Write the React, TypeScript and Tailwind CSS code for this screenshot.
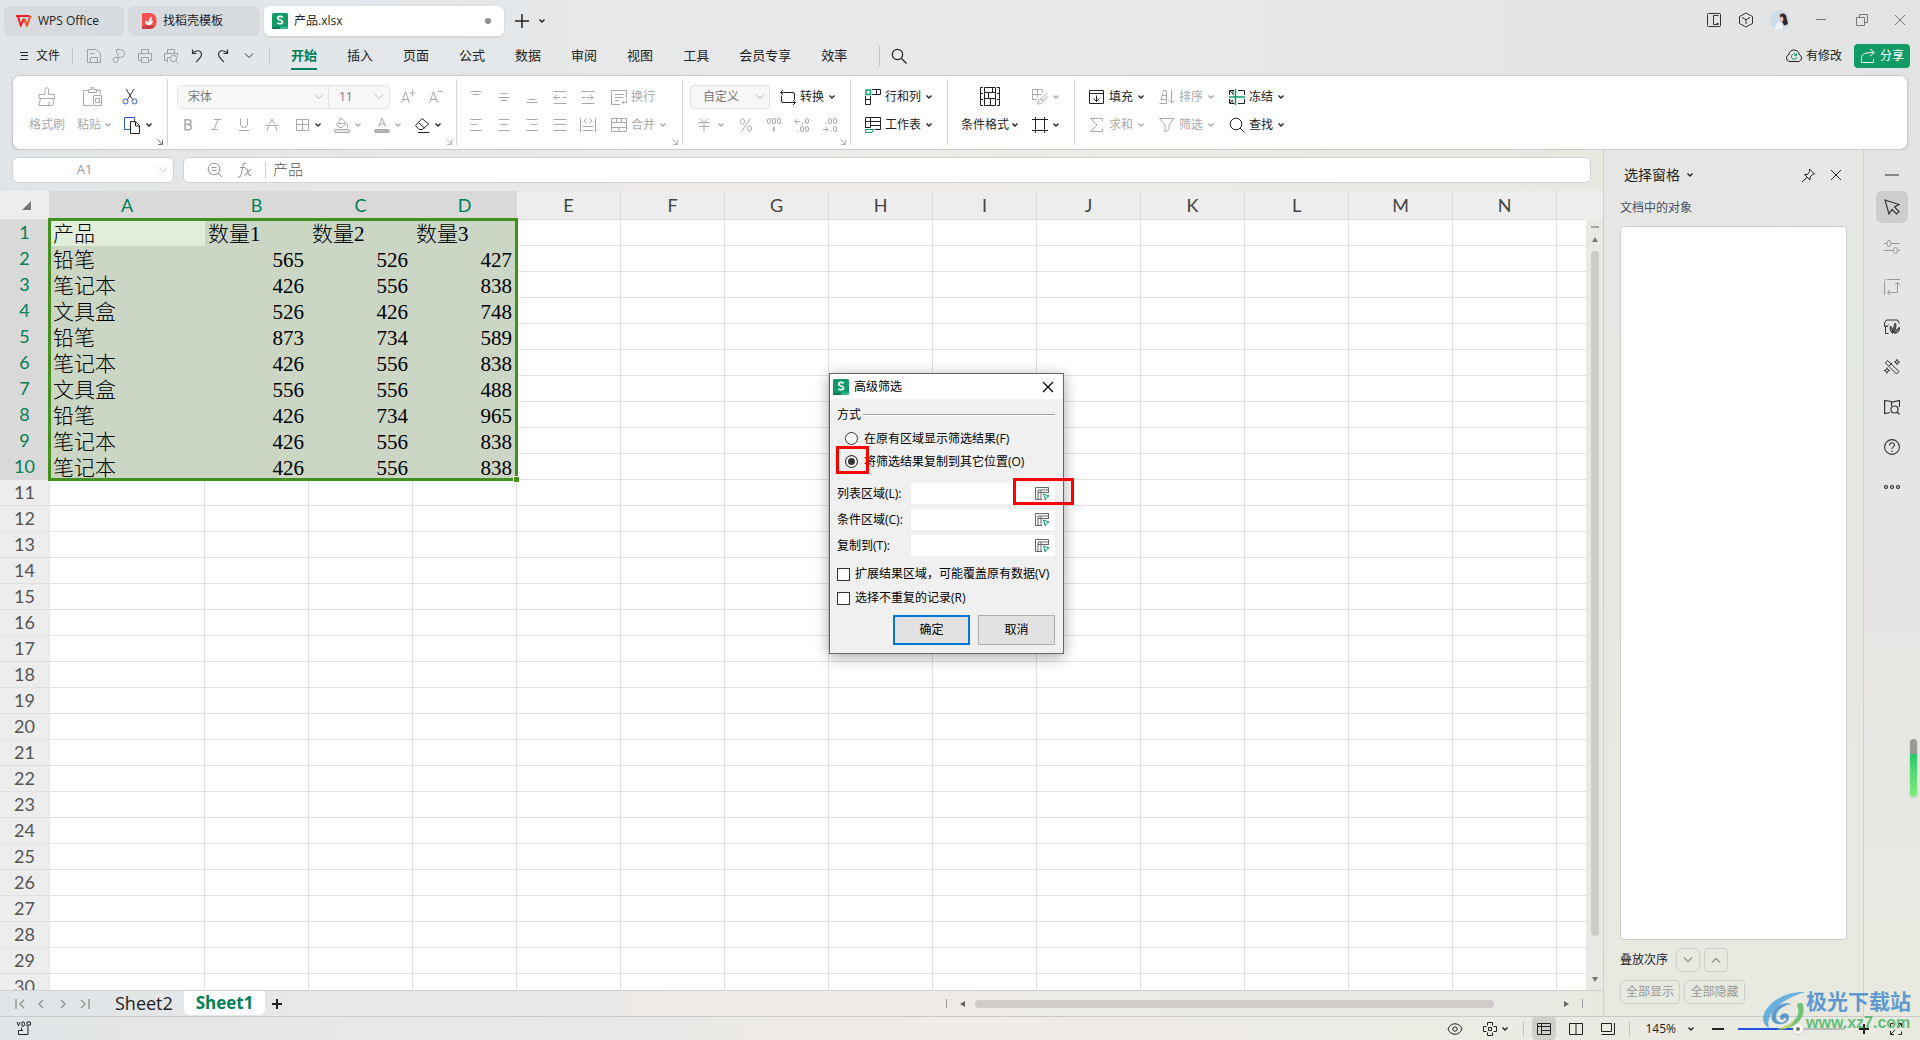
import type { ReactNode } from "react";
import { clsx } from "clsx";

/* ---------- icons ---------- */

type IconProps = { children: ReactNode; size?: number; className?: string; box?: number; w?: number };

function Icon({ children, size = 16, box = 16, w = 1, className }: IconProps) {
    return (
        <svg
            width={size}
            height={size}
            viewBox={`0 0 ${box} ${box}`}
            fill="none"
            stroke="currentColor"
            strokeWidth={w}
            className={clsx("shrink-0", className)}
            aria-hidden="true"
        >
            {children}
        </svg>
    );
}

function Chevron({ className }: { className?: string }) {
    return (
        <svg width="6" height="4" viewBox="0 0 6 4" fill="none" stroke="currentColor" strokeWidth="1.4" className={clsx("shrink-0", className)} aria-hidden="true">
            <path d="M.5 .5 3 3 5.5 .5" />
        </svg>
    );
}

function WideChevron({ className, up, w = 1 }: { className?: string; up?: boolean; w?: number }) {
    return (
        <svg width="10" height="6" viewBox="0 0 10 6" fill="none" stroke="currentColor" strokeWidth={w} className={clsx("shrink-0", className)} aria-hidden="true">
            <path d={up ? "M1 5.500 5 1.500l4 4" : "M1 .5l4 4 4-4"} />
        </svg>
    );
}

function CornerArrow({ className }: { className?: string }) {
    return (
        <svg width="6" height="6" viewBox="0 0 6 6" fill="none" stroke="currentColor" className={clsx("absolute bottom-0 right-1", className)} aria-hidden="true">
            <path d="M.5 .5l5 5M5.5 1v4.5H1" />
        </svg>
    );
}

function SheetLogo() {
    return (
        <svg width="16" height="16" viewBox="0 0 16 16" className="shrink-0" aria-hidden="true">
            <rect width="16" height="16" rx="1.5" fill="#109a66" />
            <path d="M0 13.5h16v1a1.5 1.5 0 0 1-1.5 1.5h-13A1.5 1.5 0 0 1 0 14.5z" fill="#35b583" />
            <path d="M0 13.5h8V16H1.5A1.5 1.5 0 0 1 0 14.5z" fill="#0a7a50" />
            <path d="M10.7 4.2C9 3 5.6 3 5.6 5.2c0 2.3 5 1.3 5 3.7 0 2.2-3.7 2.2-5.4 1" fill="none" stroke="#fff" strokeWidth="1.7" />
        </svg>
    );
}

function CellPicker() {
    return (
        <svg width="15" height="14" viewBox="0 0 15 14" fill="none" aria-hidden="true">
            <path d="M13.5 6V.5H.5v12H7M3 12V3h10.5M3 5.500h10.500M6 3v9" stroke="#666" />
            <path d="M8.500 7l5.500 2-2.500 1.200L10.300 13z" stroke="#109a66" fill="#fff" />
        </svg>
    );
}

/* ---------- data ---------- */

const menuTabs = ["开始", "插入", "页面", "公式", "数据", "审阅", "视图", "工具", "会员专享", "效率"];

const columns = ["A", "B", "C", "D", "E", "F", "G", "H", "I", "J", "K", "L", "M", "N"];

const records = [
    ["产品", "数量1", "数量2", "数量3"],
    ["铅笔", "565", "526", "427"],
    ["笔记本", "426", "556", "838"],
    ["文具盒", "526", "426", "748"],
    ["铅笔", "873", "734", "589"],
    ["笔记本", "426", "556", "838"],
    ["文具盒", "556", "556", "488"],
    ["铅笔", "426", "734", "965"],
    ["笔记本", "426", "556", "838"],
    ["笔记本", "426", "556", "838"],
];

const rowNumbers = Array.from({ length: 30 }, (_, i) => i + 1);

/* ---------- title bar ---------- */

function TitleBar() {
    return (
        <header className="flex h-[38px] shrink-0 items-start pt-[6px] text-xs text-[#222]">
            <button className="ml-1 flex h-[30px] w-[120px] items-center gap-[6px] rounded-md bg-[#d7dade] pl-3">
                <svg width="16" height="12" viewBox="0 0 16 12" aria-hidden="true">
                    <path d="M0 1h13.5M1.8 1l3 9.500L8 3.500" fill="none" stroke="#f5222d" strokeWidth="2" />
                    <path d="M8 3.500l2.800 7L14.500.8" fill="none" stroke="#ff4a1f" strokeWidth="2" />
                </svg>
                WPS Office
            </button>
            <button className="ml-1 flex h-[30px] w-[132px] items-center gap-[6px] rounded-md bg-[#d7dade] pl-[14px]">
                <svg width="15" height="16" viewBox="0 0 15 16" aria-hidden="true">
                    <path d="M1.5 0H8a6.5 6.5 0 0 1 6.5 6.8v2.4A6.5 6.5 0 0 1 8 16H1.5A1.5 1.5 0 0 1 0 14.5v-13A1.5 1.5 0 0 1 1.5 0z" fill="#f5504f" />
                    <path d="M0 13h12.5A6.5 6.5 0 0 1 8 16H1.5A1.5 1.5 0 0 1 0 14.5z" fill="#c93a3c" />
                    <path d="M7 12c-3 0-4-2-3.5-4.5C5 8 6 9 6.300 10 6.500 7 8 4.500 9.500 3.500c.5 2 .3 3.500-.5 5l1.800-1C11 10 9.500 12 7 12z" fill="#fff" />
                </svg>
                找稻壳模板
            </button>
            <div className="ml-1 flex h-[30px] w-60 items-center gap-[6px] rounded-md bg-white pl-2 pr-[13px] shadow-sm">
                <SheetLogo />
                <span className="flex-1">产品.xlsx</span>
                <span className="size-[6px] rounded-full bg-[#8f8f8f]" />
            </div>
            <button aria-label="新建" className="ml-[11px] flex h-[30px] items-center">
                <Icon size={14} box={14} w={1.5}><path d="M7 0v14M0 7h14" /></Icon>
            </button>
            <button aria-label="更多标签" className="ml-[10px] flex h-[30px] items-center">
                <Chevron />
            </button>
            <div className="ml-auto flex h-7 items-center text-[#333]">
                <button aria-label="分屏" className="flex w-8 justify-center">
                    <Icon><rect x="1.5" y="1.5" width="13" height="13" rx="1" /><path d="M12.5 12.5h-5v-9h5M10.500 11.500h2" /></Icon>
                </button>
                <button aria-label="应用" className="flex w-8 justify-center">
                    <Icon><path d="M8 1l6.500 3.500v7L8 15l-6.500-3.500v-7zM4 5.500l4 2.200 4-2.200M8 7.700V12" /></Icon>
                </button>
                <button aria-label="账号" className="flex w-9 justify-center">
                    <svg width="20" height="20" viewBox="0 0 20 20" aria-hidden="true">
                        <circle cx="10" cy="10" r="10" fill="#cfdde6" />
                        <path d="M10 5c2-2.500 6-1.500 6.500 2 .5 4 2 5 1 7.500l-3.500 1C13 12 9 9 10 5z" fill="#33272d" />
                        <path d="M10.500 7c1.500-1 3 0 3 2s-1.500 3-2.500 2.500-1.500-3-.5-4.500z" fill="#e9bfae" />
                        <path d="M5 19c0-4 2-6.500 5-7l3 3v4.500z" fill="#eef3f6" />
                        <path d="M9 5l3-1.500" stroke="#b79a62" />
                    </svg>
                </button>
                <button aria-label="最小化" className="flex w-[46px] justify-center text-[#777]"><Icon><path d="M3 7.500h10" /></Icon></button>
                <button aria-label="还原" className="flex w-9 justify-center text-[#777]">
                    <Icon><path d="M2.5 5.5h8v8h-8zM5.500 5V2.500h8v8H11" /></Icon>
                </button>
                <button aria-label="关闭" className="flex w-10 justify-center text-[#777]"><Icon><path d="M3 3l10 10M13 3L3 13" /></Icon></button>
            </div>
        </header>
    );
}

/* ---------- menu bar ---------- */

function MenuBar() {
    return (
        <nav className="mb-[2px] flex h-[35px] shrink-0 items-center text-[#222]">
            <button className="ml-5 flex items-center gap-2 text-xs">
                <Icon size={8} box={8}><path d="M0 .5h8M1 3.500h7M0 7.500h8" /></Icon>
                文件
            </button>
            <span className="ml-3 h-4 w-px bg-[#c3c6ca]" />
            <div className="ml-2 flex items-center text-[#9da0a4]">
                <button aria-label="保存" className="flex w-[25px] justify-center">
                    <Icon><path d="M1.500 1.500h9l4 4v9h-13zM4.500 14V9.500h7V14M4.500 5.500h4" /></Icon>
                </button>
                <button aria-label="输出" className="flex w-[26px] justify-center">
                    <Icon><path d="M5.500 5V1.500h4a4 4 0 0 1 0 8h-5a2.500 2.500 0 1 0 2.500 2.500V5" /></Icon>
                </button>
                <button aria-label="打印" className="flex w-[26px] justify-center">
                    <Icon><path d="M4.500 5V1.500h7V5M4 12.500H1.500v-7h13v7H12M4.500 9.500h7v5h-7z" /></Icon>
                </button>
                <button aria-label="打印预览" className="flex w-[26px] justify-center">
                    <Icon><path d="M4.500 5V1.500h7V5M4 12.500H1.500v-7h13v3M4.500 14.500v-5H7" /><circle cx="10.500" cy="10.500" r="3.200" /><path d="M13 13l2.500 2.500" /></Icon>
                </button>
                <button aria-label="撤销" className="flex w-[26px] justify-center text-[#333]">
                    <Icon w={1.200}><path d="M3.500 1.500v4h4M3.500 5.500C6 2 12 1.500 12.500 6c.2 3-2.500 5-5.500 8" /></Icon>
                </button>
                <button aria-label="恢复" className="flex w-[26px] justify-center text-[#333]">
                    <Icon w={1.200}><path d="M12.500 1.500v4h-4M12.500 5.500C10 2 4 1.500 3.500 6c-.2 3 2.500 5 5.500 8" /></Icon>
                </button>
                <button aria-label="更多" className="flex w-[26px] justify-center text-[#333]">
                    <WideChevron />
                </button>
            </div>
            <span className="ml-[7px] h-4 w-px bg-[#c3c6ca]" />
            <ul className="ml-[21px] flex items-center gap-[30px] text-[13px]">
                {menuTabs.map((tab, i) => (
                    <li key={tab}>
                        <button className={clsx("h-7 border-b-2 leading-6", i === 0 ? "border-[#008055] font-bold text-[#008055]" : "border-transparent")}>
                            {tab}
                        </button>
                    </li>
                ))}
            </ul>
            <span className="ml-8 h-5 w-px bg-[#c3c6ca]" />
            <button aria-label="搜索" className="ml-[11px]">
                <Icon w={1.200}><circle cx="6.500" cy="6.500" r="5.200" /><path d="M10.500 10.500l5 5" /></Icon>
            </button>
            <div className="ml-auto mr-[10px] flex items-center gap-3 text-xs">
                <button className="flex items-center gap-1">
                    <Icon>
                        <path d="M4 13.500C1.500 13.500.5 11.500.5 10S1.500 6.700 3 6.500C3 4 5 2 8 2s5 2 5 4.500c1.500.2 2.500 2 2.500 3.500s-1 3.500-3.500 3.500z" />
                        <path d="M10.500 7.300A2.700 2.700 0 1 0 10.800 9M10.500 5.500v2h-2" stroke="#109a66" />
                    </Icon>
                    有修改
                </button>
                <button className="flex h-6 w-14 items-center justify-center gap-1 rounded bg-[#109a66] text-white">
                    <Icon><path d="M1.500 9v5.500h12V11M1.500 9.500C2 6 5 4.500 13 4.500M10 1l4.500 3.500L10 8" /></Icon>
                    分享
                </button>
            </div>
        </nav>
    );
}

/* ---------- ribbon ---------- */

function Tool({ label, icon, off, arrow }: { label: string; icon: ReactNode; off?: boolean; arrow?: boolean }) {
    return (
        <button className={clsx("flex h-7 items-center whitespace-nowrap", off ? "text-[#a9a9a9]" : "text-[#222]")}>
            {icon}
            <span className="ml-1">{label}</span>
            {arrow && <Chevron className="ml-[5px]" />}
        </button>
    );
}

function IconButton({ label, children, arrow, off = true }: { label: string; children: ReactNode; arrow?: boolean; off?: boolean }) {
    return (
        <button
            aria-label={label}
            className={clsx("flex h-7 shrink-0 items-center", arrow ? "w-10 gap-[5px] pl-2" : "w-7 justify-center", off ? "text-[#a9a9a9]" : "text-[#222]")}
        >
            {children}
            {arrow && <Chevron />}
        </button>
    );
}

const group = "relative flex h-[66px] shrink-0 border-r border-[#d5d5d5] pt-1";

function Ribbon() {
    return (
        <section className="mx-3 flex h-[75px] shrink-0 items-start overflow-hidden rounded-lg border border-[#c9cbce] bg-white pt-[3px] text-xs shadow">
            {/* Clipboard */}
            <div className={clsx(group, "w-[155px] pl-4 text-[#a9a9a9]")}>
                <button className="flex w-9 flex-col items-center">
                    <span className="flex h-7 items-center">
                        <Icon size={20} box={20}><path d="M8 7.500v-5a1.500 1.500 0 0 1 3.500 0v5h6v4H2v-4zM3.500 11.500L2 18.500h13.500c1-2 1.500-4 1-7M11.500 18l1-3.500" /></Icon>
                    </span>
                    <span className="leading-7">格式刷</span>
                </button>
                <button className="ml-3 flex flex-col">
                    <span className="flex h-7 items-center pl-[6px]">
                        <Icon size={20} box={20}><path d="M5 3.500H.5v15H9M5.500 5.500v-3h3v-2h2v2h3v3zM14 3.500h3.500V7M10.500 8.500h8v10h-8zM12.500 11.500h4v4h-4z" /></Icon>
                    </span>
                    <span className="flex items-center gap-1 leading-7">粘贴<Chevron /></span>
                </button>
                <div className="ml-[11px]">
                    <button aria-label="剪切" className="flex h-7 items-center">
                        <Icon>
                            <path d="M4 0l6.500 10.500M12 0L5.500 10.500" stroke="#333" />
                            <circle cx="3.500" cy="12.500" r="2.500" stroke="#2b59d9" />
                            <circle cx="12.500" cy="12.500" r="2.500" stroke="#2b59d9" />
                        </Icon>
                    </button>
                    <button aria-label="复制" className="flex h-7 items-center gap-[5px] pl-[2px] text-[#222]">
                        <Icon size={17} box={17}>
                            <path d="M6 12.500H.5v-12h10V4" stroke="#2b59d9" />
                            <path d="M6.500 4.500h5l4 4v8h-9zM11.500 4.500v4.500h4" />
                        </Icon>
                        <Chevron />
                    </button>
                </div>
                <CornerArrow className="text-[#777]" />
            </div>

            {/* Font */}
            <div className={clsx(group, "w-[289px] flex-col pl-[6px]")}>
                <div className="flex h-7 items-center pl-[3px]">
                    <div className="flex h-6 w-[213px] items-center rounded border border-[#e5e5e5] bg-[#f7f7f7] text-[#777]">
                        <div className="flex h-full w-[151px] items-center border-r border-[#e5e5e5] pr-1">
                            <select aria-label="字体" className="min-w-0 flex-1 appearance-none pl-[10px]"><option>宋体</option></select>
                            <WideChevron className="text-[#b5b5b5]" />
                        </div>
                        <div className="flex h-full flex-1 items-center pr-[5px]">
                            <select aria-label="字号" className="min-w-0 flex-1 appearance-none pl-[10px]"><option>11</option></select>
                            <WideChevron className="text-[#b5b5b5]" />
                        </div>
                    </div>
                    <span className="w-1" />
                    <IconButton label="增大字号"><Icon><path d="M1.500 14L5.500 2.500 9.500 14M3 10.500h5.500M12.500 1v6M9.500 4h6" /></Icon></IconButton>
                    <IconButton label="减小字号"><Icon><path d="M1.500 14L5.500 2.500 9.500 14M3 10.500h5.500M9.500 2.500h5" /></Icon></IconButton>
                </div>
                <div className="flex h-7">
                    <IconButton label="加粗"><Icon w={1.500}><path d="M5 2.700h3.500a2.400 2.400 0 0 1 0 4.800H5M5 7.500h4a2.700 2.700 0 0 1 0 5.300H5M5 2v11.500" /></Icon></IconButton>
                    <IconButton label="倾斜"><Icon><path d="M6 2.500h7M3 12.500h7M10 2.500l-4 10" /></Icon></IconButton>
                    <IconButton label="下划线"><Icon><path d="M4.500 1.500V7a3.500 3.500 0 0 0 7 0V1.500M3 13.500h10" /></Icon></IconButton>
                    <IconButton label="删除线"><Icon><path d="M2 8.500h12M5.500 7L8 2l2.500 5M4.500 10L3 14M11.500 10l1.500 4" /></Icon></IconButton>
                    <button aria-label="边框" className="flex h-7 w-10 items-center gap-[5px] pl-2 text-[#a9a9a9]">
                        <Icon><path d="M2.500 2.500h12v11h-12zM8.500 2.500v11M2.500 7.500h12" /></Icon>
                        <Chevron className="text-[#333]" />
                    </button>
                    <IconButton label="填充颜色" arrow>
                        <Icon><path d="M7.500 1.500l5 4.500-4.500 4.500H5.500L2.500 7.500zM3 6.500h8.500M6 3V.5M13.500 7v3.500" /><rect x=".5" y="12.500" width="15" height="3" rx="1.500" fill="#e6e6e6" /></Icon>
                    </IconButton>
                    <IconButton label="字体颜色" arrow>
                        <Icon><path d="M4.500 10L8 1l3.500 9M5.500 7h5" /><rect x=".5" y="12.500" width="15" height="3" rx="1.500" fill="#b5b5b5" /></Icon>
                    </IconButton>
                    <IconButton label="清除" arrow off={false}>
                        <Icon><path d="M1.500 8.500L8 1.500 14.500 7 8.500 12.500H5zM4.500 5.500l6 5.500M4 15.500h11.500" /></Icon>
                    </IconButton>
                </div>
                <CornerArrow className="text-[#b5b5b5]" />
            </div>

            {/* Alignment */}
            <div className={clsx(group, "w-[226px] flex-col pl-[5px]")}>
                <div className="flex h-7">
                    <IconButton label="顶端对齐"><Icon><path d="M2.500 2.500h11M4.500 5.500h7" /></Icon></IconButton>
                    <IconButton label="垂直居中"><Icon><path d="M4.500 4.500h7M2.500 8.500h11M4.500 11.500h7" /></Icon></IconButton>
                    <IconButton label="底端对齐"><Icon><path d="M4.500 10.500h7M2.500 13.500h11" /></Icon></IconButton>
                    <IconButton label="减少缩进"><Icon><path d="M1.500 2.500h13M1.500 14.500h13M2 8.500h6M10.500 8.500h4M5 5.500l-3 3 3 3" /></Icon></IconButton>
                    <IconButton label="增加缩进"><Icon><path d="M1.500 2.500h13M1.500 14.500h13M2 8.500h3M7 8.500h6M10 5.500l3 3-3 3" /></Icon></IconButton>
                    <div className="ml-[9px]">
                        <Tool off label="换行" icon={<Icon><path d="M9 15.500H.5V1.500h15v8M4 5.500h8.500M4 8.500h8.500M4 11.500h4M15.500 10.500v3H11M12.500 12L11 13.500l1.500 1.500" /></Icon>} />
                    </div>
                </div>
                <div className="flex h-7">
                    <IconButton label="左对齐"><Icon><path d="M2.500 2.500h11M2.500 7.500h7M2.500 13.500h11" /></Icon></IconButton>
                    <IconButton label="居中"><Icon><path d="M2.500 2.500h11M4.500 7.500h7M2.500 13.500h11" /></Icon></IconButton>
                    <IconButton label="右对齐"><Icon><path d="M2.500 2.500h11M6.500 7.500h7M2.500 13.500h11" /></Icon></IconButton>
                    <IconButton label="两端对齐"><Icon><path d="M1.500 2.500h13M1.500 7.500h13M1.500 13.500h13" /></Icon></IconButton>
                    <IconButton label="分散对齐"><Icon><path d="M.5 1v14M15.500 1v14M3 9.500h10M3 13.500h10M6.500 1.500L4 4l2.500 2.500M9.500 1.500L12 4 9.500 6.500" /></Icon></IconButton>
                    <div className="ml-[9px]">
                        <Tool off arrow label="合并" icon={<Icon><path d="M.5 1.500h15v13H.5zM.5 5.500h15M.5 10.500h15M5.500 1.500v4M10.500 1.500v4M8 10.500v4" /></Icon>} />
                    </div>
                </div>
                <CornerArrow className="text-[#b5b5b5]" />
            </div>

            {/* Number */}
            <div className={clsx(group, "w-[168px] flex-col pl-[7px]")}>
                <div className="flex h-7 items-center">
                    <div className="mr-[10px] flex h-6 w-20 items-center rounded border border-[#e0e0e0] bg-[#f7f7f7] pr-1 text-[#777]">
                        <select aria-label="数字格式" className="min-w-0 flex-1 appearance-none pl-3"><option>自定义</option></select>
                        <WideChevron className="text-[#b5b5b5]" />
                    </div>
                    <Tool arrow label="转换" icon={<Icon><path d="M.5 3.500h12.500a1.500 1.500 0 0 1 1.500 1.500v5.500M3 1L.5 3.500 3 6M1.500 6.500V12A1.500 1.500 0 0 0 3 13.500h12.500M13 11l2.500 2.500L13 16" /></Icon>} />
                </div>
                <div className="flex h-7 items-center text-[#a9a9a9]">
                    <IconButton label="货币"><Icon><path d="M4 1.500l4 4 4-4M2.500 5.500h11M2.500 9.500h11M8 5.500V15" /></Icon></IconButton>
                    <Chevron className="mr-2" />
                    <IconButton label="百分比"><Icon><path d="M12.500 1.500l-9 13" /><ellipse cx="4.500" cy="4.500" rx="2" ry="2.700" /><ellipse cx="11.500" cy="11.500" rx="2" ry="2.700" /></Icon></IconButton>
                    <IconButton label="千位分隔">
                        <Icon>
                            <rect x="1.500" y="1.500" width="3" height="5" rx="1.500" />
                            <rect x="6.500" y="1.500" width="3" height="5" rx="1.500" />
                            <rect x="11.500" y="1.500" width="3" height="5" rx="1.500" />
                            <path d="M8 10v2.500l-1 1.500" strokeWidth="2" />
                        </Icon>
                    </IconButton>
                    <IconButton label="增加小数位">
                        <Icon>
                            <path d="M1 4.500h5M3.500 2L1 4.500 3.500 7M8 6h1.500M3 14h1.500" />
                            <rect x="11.500" y="1.500" width="3" height="5" rx="1.500" />
                            <rect x="6.500" y="9.500" width="3" height="5" rx="1.500" />
                            <rect x="11.500" y="9.500" width="3" height="5" rx="1.500" />
                        </Icon>
                    </IconButton>
                    <IconButton label="减少小数位">
                        <Icon>
                            <path d="M1 12.500h5M3.500 10L6 12.500 3.500 15M8 14h1.500M3 6h1.500" />
                            <rect x="11.500" y="1.500" width="3" height="5" rx="1.500" />
                            <rect x="6.500" y="1.500" width="3" height="5" rx="1.500" />
                            <rect x="11.500" y="9.500" width="3" height="5" rx="1.500" />
                        </Icon>
                    </IconButton>
                </div>
                <CornerArrow className="text-[#b5b5b5]" />
            </div>

            {/* Rows, columns, sheets */}
            <div className={clsx(group, "w-[97px] flex-col pl-[14px]")}>
                <Tool
                    arrow
                    label="行和列"
                    icon={<Icon><path d="M1 1h4.500v4.500H1z" stroke="#109a66" strokeWidth="1.500" /><path d="M7 .5h8.500v5H7M11.500.5v5M.5 7v8.500h5V7M.5 10.500h5" /></Icon>}
                />
                <Tool
                    arrow
                    label="工作表"
                    icon={<Icon><path d="M.5 11V.5h15v12H10M.5 4.500h15M5.500.5v10M5.500 8.500h10M.5 10.500h5" /><path d="M.5 12.500h8l-1.500 3H.5z" stroke="#109a66" /></Icon>}
                />
            </div>

            {/* Styles */}
            <div className={clsx(group, "w-[127px] pl-[13px]")}>
                <button className="flex flex-col text-[#222]">
                    <span className="flex h-7 w-[57px] items-center pl-[19px]">
                        <Icon size={20} box={20}><path d="M3 .5H.5v18H3M17 .5h2.500v18H17M.5 6.500H3M.5 12.500H3M17 6.500h2.500M17 12.500h2.500M4.500.5h11v5h-11zM4.500 5.500v13h11v-13M4.500 11.500h11M8.500 5.500v6M12.500.5v5M10.500 11.500v7" /></Icon>
                    </span>
                    <span className="flex items-center gap-[3px] leading-7">条件格式<Chevron /></span>
                </button>
                <div className="ml-[14px]">
                    <button aria-label="表格样式" className="flex h-7 items-center gap-[5px] text-[#a9a9a9]">
                        <Icon><path d="M5 10.500H.5v-10h10V4M.5 5.500h9M5.500.5v8M15.500 4L9 10M15.500 7L11 12M9 10c-2 0-2 3-4 4.500 3 1 6 0 6-2.500z" /></Icon>
                        <Chevron />
                    </button>
                    <button aria-label="单元格" className="flex h-7 items-center gap-[5px] text-[#222]">
                        <Icon><path d="M3.500 0v16M12.500 0v16M0 2.500h16M0 13.500h16" /></Icon>
                        <Chevron />
                    </button>
                </div>
            </div>

            {/* Editing */}
            <div className="grid grid-cols-[70px_70px_70px] pl-[14px] pt-1">
                <Tool arrow label="填充" icon={<Icon><path d="M.5 1.500h14v13H.5zM.5 4.500h14M7.500 6.500v6M4.500 9.500l3 3 3-3" /></Icon>} />
                <Tool off arrow label="排序" icon={<Icon><path d="M2 10.500l2.500-9h3v9M3 6.500h4.500M.5 14.500H8M1.500 10.500h6v4M12.500 1v13M9.500 11l3 3 3-3" /></Icon>} />
                <Tool
                    arrow
                    label="冻结"
                    icon={
                        <Icon>
                            <path d="M5 1.500H.5v4.500M.5 10v4.500H5M9 1.500h6.500V6M15.500 10v4.500H9M1 2l4 4M4 1.500v3M1 10.500l4 4M1 14l3-3" />
                            <path d="M0 8h16M6.500 0v16" stroke="#109a66" strokeWidth="1.500" />
                        </Icon>
                    }
                />
                <Tool off arrow label="求和" icon={<Icon><path d="M13.500 4V1.500h-12L8 8l-6.500 6.500h12V12" /></Icon>} />
                <Tool off arrow label="筛选" icon={<Icon><path d="M.5 1.500h14.500L10 8v4l-4 3V8z" /></Icon>} />
                <Tool arrow label="查找" icon={<Icon><circle cx="7" cy="7" r="5.800" /><path d="M11 11l4.500 4.500" /></Icon>} />
            </div>
        </section>
    );
}

/* ---------- sheet ---------- */

function FormulaBar() {
    return (
        <div className="flex h-[34px] shrink-0 items-start gap-[9px] pl-3 pr-3 text-[#999]">
            <div className="flex h-[26px] w-[162px] items-center rounded-md border border-[#d0d2d4] bg-white pr-[5px]">
                <input aria-label="名称框" defaultValue="A1" className="w-full min-w-0 flex-1 pr-[2px] text-center text-[13px] outline-none" />
                <WideChevron className="text-[#c5c5c5]" />
            </div>
            <div className="flex h-[26px] flex-1 items-center rounded-md border border-[#d0d2d4] bg-white pl-[23px]">
                <button aria-label="浏览公式结果">
                    <Icon><circle cx="7" cy="7" r="5.800" /><path d="M11 11l4 4M4.500 5.500h5M4.500 8.500h5" /></Icon>
                </button>
                <button aria-label="插入函数" className="ml-[14px]">
                    <Icon w={1.100}><path d="M9 1.500C6.500.5 6 3 5.700 5L4 13c-.4 1.800-1.500 2.500-3 1.800M3 5.500h5.500M8 7c2-.8 2.300 0 3 3s1.500 4 3.500 3M14.500 7.500c-2-1-5 5.500-7 6" /></Icon>
                </button>
                <span className="ml-3 h-4 w-px bg-[#ccc]" />
                <input aria-label="编辑栏" defaultValue="产品" className="ml-[7px] h-5 min-w-0 flex-1 pb-[2px] text-[15px] font-light text-[#555] outline-none" />
            </div>
        </div>
    );
}

function Sheet() {
    return (
        <div className="flex min-h-0 flex-1">
            <div className="relative min-w-0 flex-1 overflow-hidden bg-white">
                <table className="w-full table-fixed border-separate border-spacing-0">
                    <colgroup>
                        <col className="w-[50px]" />
                        <col className="w-[155px]" />
                        {columns.slice(1).map((c) => (
                            <col key={c} className="w-[104px]" />
                        ))}
                        <col />
                    </colgroup>
                    <thead className="font-['Lato',sans-serif] text-lg">
                        <tr className="h-[29px] bg-[#ededed]">
                            <th aria-label="全选" className="border-b border-r border-[#d9d9d9] p-0">
                                <svg width="9" height="9" viewBox="0 0 9 9" className="ml-[22px]" aria-hidden="true"><path d="M9 0v9H0z" fill="#777" /></svg>
                            </th>
                            {columns.map((c, i) => (
                                <th
                                    key={c}
                                    className={clsx("border-b border-r border-[#d9d9d9] p-0 font-normal leading-7", i < 4 ? "bg-[#d9d9d9] text-[#008055]" : "text-[#444]")}
                                >
                                    {c}
                                </th>
                            ))}
                            <th className="border-b border-[#d9d9d9] p-0" />
                        </tr>
                    </thead>
                    <tbody className="font-['Liberation_Serif','Noto_Sans_CJK_SC',serif] text-[21px] font-light text-black">
                        {rowNumbers.map((n) => {
                            const record = records[n - 1];

                            return (
                                <tr key={n} className="h-[26px]">
                                    <th
                                        className={clsx(
                                            "border-b border-r p-0 align-top font-['Lato',sans-serif] text-lg font-normal leading-6",
                                            record ? "border-[#d9d9d9] bg-[#d9d9d9] text-[#008055]" : "border-[#e1e1e1] bg-[#ededed] text-[#555]"
                                        )}
                                    >
                                        {n}
                                    </th>
                                    {columns.map((c, i) => {
                                        const value = record?.[i];

                                        return (
                                            <td
                                                key={c}
                                                className={clsx(
                                                    "h-[26px] border-b border-r p-0",
                                                    value === undefined && "border-[#e1e1e1]",
                                                    value !== undefined && "pt-[3px] leading-[22px]",
                                                    value !== undefined && (n === 1 && i === 0 ? "border-[#e1eeda] bg-[#e1eeda]" : "border-[#cbd6c5] bg-[#cbd6c5]"),
                                                    n > 1 && i > 0 ? "pr-1 text-right" : "pl-[3px]"
                                                )}
                                            >
                                                {value}
                                            </td>
                                        );
                                    })}
                                    <td className="border-b border-[#e1e1e1]" />
                                </tr>
                            );
                        })}
                    </tbody>
                </table>
                {/* selection outline */}
                <div className="pointer-events-none absolute left-[48px] top-[27px] h-[263px] w-[470px] border-[3px] border-[#43901f]">
                    <span className="absolute -bottom-[4px] -right-[4px] size-[6px] border-l border-t border-white bg-[#43901f]" />
                </div>
            </div>
            <div className="flex w-[17px] shrink-0 flex-col">
                <div className="h-[29px] bg-[#ededed]" />
                <div className="flex flex-1 flex-col items-center bg-[#e7e9e2] pb-2 pt-[6px] text-[#777]">
                    <span className="h-[2px] w-2 bg-[#aaa]" />
                    <svg width="6" height="5" viewBox="0 0 6 5" className="mt-[9px]" aria-hidden="true"><path d="M3 0l3 5H0z" fill="currentColor" /></svg>
                    <div className="mb-[41px] mt-[9px] w-2 flex-1 rounded-full bg-[#cccdc9]" />
                    <svg width="6" height="5" viewBox="0 0 6 5" aria-hidden="true"><path d="M3 5L0 0h6z" fill="currentColor" /></svg>
                </div>
            </div>
        </div>
    );
}

function SheetTabs() {
    return (
        <div className="flex h-[26px] shrink-0 items-start border-t border-[#d0d2d2]">
            <div className="flex h-[25px] items-center gap-[6px] pl-3 text-[#999]">
                <button aria-label="第一张"><Icon w={1.500}><path d="M4 3v10M12 4L8 8l4 4" /></Icon></button>
                <button aria-label="上一张"><Icon w={1.500}><path d="M9 4L5 8l4 4" /></Icon></button>
                <button aria-label="下一张"><Icon w={1.500}><path d="M5 4l4 4-4 4" /></Icon></button>
                <button aria-label="最后一张"><Icon w={1.500}><path d="M3 4l4 4-4 4M11 3v10" /></Icon></button>
            </div>
            <button className="ml-[18px] w-[72px] pl-[3px] text-left text-lg leading-6 text-[#222]">Sheet2</button>
            <button className="h-6 w-[81px] rounded-b-md bg-white text-[17px] font-bold leading-6 text-[#008055]">Sheet1</button>
            <button aria-label="新建工作表" className="ml-[6px] flex h-[26px] items-center text-[#222]">
                <Icon size={12} box={12} w={2}><path d="M6 1v10M1 6h10" /></Icon>
            </button>
            <div className="ml-auto flex h-[25px] w-[41%] items-center text-[#666]">
                <span className="h-[9px] w-px bg-[#999]" />
                <svg width="5" height="6" viewBox="0 0 5 6" className="ml-[13px]" aria-hidden="true"><path d="M5 0v6L0 3z" fill="currentColor" /></svg>
                <div className="ml-[10px] mr-[70px] h-2 flex-1 rounded-full bg-[#cfccc9]" />
                <svg width="5" height="6" viewBox="0 0 5 6" aria-hidden="true"><path d="M0 0v6l5-3z" fill="currentColor" /></svg>
                <span className="ml-[13px] mr-5 h-[9px] w-px bg-[#999]" />
            </div>
        </div>
    );
}

/* ---------- right side ---------- */

function SelectionPane() {
    const smallButton = "flex h-6 items-center justify-center rounded border border-[#cfd0cb] text-[#999]";

    return (
        <aside className="flex w-[261px] shrink-0 flex-col border-x border-[#cfd0cf] bg-linear-to-b from-[#e4e7e3] via-[#e6e7e3] to-[#e8eae0] px-4 pb-3 text-xs">
            <div className="flex h-[49px] items-center pl-1 pr-[3px] text-[#222]">
                <h2 className="text-sm">选择窗格</h2>
                <Chevron className="ml-[7px]" />
                <button aria-label="固定" className="ml-auto">
                    <Icon><path d="M9.500 2l5 5-2 .5L10 10v3L4.500 7.500h3L9.500 4.500zM7 10.500L2 15" /></Icon>
                </button>
                <button aria-label="关闭窗格" className="ml-3">
                    <Icon><path d="M3 3l10 10M13 3L3 13" /></Icon>
                </button>
            </div>
            <p className="pb-[9px] leading-[18px] text-[#44506a]">文档中的对象</p>
            <div className="min-h-0 flex-1 rounded border border-[#cbcccb] bg-white" />
            <div className="mt-2 flex items-center gap-1 text-[#223]">
                <span className="mr-1">叠放次序</span>
                <button aria-label="下移一层" className={clsx(smallButton, "w-6")}><WideChevron w={1.500} /></button>
                <button aria-label="上移一层" className={clsx(smallButton, "w-6")}><WideChevron up w={1.500} /></button>
            </div>
            <div className="mt-2 flex gap-1">
                <button className={clsx(smallButton, "w-[60px]")}>全部显示</button>
                <button className={clsx(smallButton, "w-[61px]")}>全部隐藏</button>
            </div>
        </aside>
    );
}

function ToolRail() {
    const railButton = "flex size-8 items-center justify-center rounded-md";

    return (
        <aside className="flex w-14 shrink-0 flex-col items-center gap-2 bg-linear-to-b from-[#e3e5e5] via-[#e7e5e4] to-[#e8eae0] pt-[9px] text-[#333]">
            <button aria-label="收起" className="flex h-6 w-8 items-start justify-center pt-2 text-[#888]"><Icon w={2}><path d="M1 8h14" /></Icon></button>
            <button aria-label="选择" className={clsx(railButton, "bg-[#cdcfce]")}><Icon w={1.200}><path d="M1 1l14 4.500-4.500 2.500 4.500 4.500-2.500 2.500L8 10.500 5 15z" /></Icon></button>
            <button aria-label="属性" className={clsx(railButton, "text-[#999]")}><Icon><path d="M0 4.500h3M7 4.500h9M0 11.500h9M13 11.500h3" /><ellipse cx="5" cy="4.500" rx="2" ry="3" /><ellipse cx="11.500" cy="11.500" rx="2" ry="3" /></Icon></button>
            <button aria-label="对齐" className={clsx(railButton, "text-[#999]")}><Icon><path d="M0 1h2M3 .5h13M.5 3v13M13.500 4v9.500H4M11 6l2.500-2.500L16 6M6 11l-2.500 2.500L6 16" /></Icon></button>
            <button aria-label="稻壳资源" className={railButton}>
                <Icon>
                    <path d="M4.500 14.500h-3V8M3.500 7.500h-3V4l2-3h11l2 3.500M.5 4v2.500c1.500 1.500 3.500 1 4-1" />
                    <path d="M6.500 7c2 2 2.500 4.500 2 7.500-2-2-3-4.500-2-7.500zM11.500 4c1 3 0 7-2 10-.3-4 0-7 2-10zM15.500 8.500c0 4-2 5.500-5 6 1-2.500 2.500-5 5-6z" fill="#777" />
                </Icon>
            </button>
            <button aria-label="工具箱" className={railButton}>
                <Icon>
                    <path d="M3.500 1.500l11.500 11L12.500 15 1.500 4zM5 7l3-3" />
                    <circle cx="13" cy="3" r="1.500" />
                    <circle cx="3" cy="11.500" r="1.500" />
                    <path d="M13 0v1.500M13 4.500V6M10 3h1.500M14.500 3H16M0 11.500h1.500M3 8.500V10M3 13v1.500M4.500 11.500H6" />
                </Icon>
            </button>
            <button aria-label="查找资料" className={railButton}><Icon w={1.200}><path d="M6 13.500L.6 14.500v-13L7 2.500l1 .5 7.500-1.500V8M7.500 3v4" /><circle cx="10.500" cy="10.500" r="3.500" /><path d="M13 13l2.500 2.500" /></Icon></button>
            <button aria-label="帮助" className={railButton}><Icon w={1.100}><circle cx="8" cy="8" r="7.400" /><path d="M5.500 6.500C5.500 3 10.500 3 10.500 6c0 1.500-2.500 2-2.500 4M8 11.500v1.500" /></Icon></button>
            <button aria-label="更多" className={railButton}><Icon w={1.200}><circle cx="2" cy="8" r="1.500" /><circle cx="8" cy="8" r="1.500" /><circle cx="14" cy="8" r="1.500" /></Icon></button>
        </aside>
    );
}

/* ---------- status bar ---------- */

function StatusBar() {
    return (
        <footer className="flex h-6 shrink-0 items-center border-t border-[#c8caca] text-[#222]">
            <button aria-label="VBA" className="ml-4">
                <Icon><path d="M1 1l1.500 4L4 1M6 1v4h2c1.500-1 .5-2 0-2 .5 0 1-2-.5-2zM11 5V1h3.500v3H12v9.500H2.500v-4H7M5.500 9.500v-3" /></Icon>
            </button>
            <div className="ml-auto flex items-center">
                <button aria-label="护眼模式"><Icon><path d="M1 8c2.500-7 11.500-7 14 0-2.500 7-11.500 7-14 0z" /><circle cx="8" cy="8" r="2.200" /></Icon></button>
                <button aria-label="阅读模式" className="ml-[19px] flex items-center gap-1">
                    <Icon><path d="M5.500 4.500v-3h5v3M5.500 11.500v3h5v-3M4.500 5.500h-3v5h3M11.500 5.500h3v5h-3M6.500 6.500h3v3h-3z" /></Icon>
                    <Chevron />
                </button>
                <span className="ml-[15px] h-4 w-px bg-[#c5c6c2]" />
                <button aria-label="普通视图" className="ml-2 flex h-[23px] w-6 items-center justify-center rounded bg-[#cfd0ca]">
                    <Icon size={14} box={14}><path d="M.5 1.500h13v11H.5zM.5 4.500h13M4.500 1.500v11M4.500 8.500h9" /></Icon>
                </button>
                <button aria-label="分页预览" className="ml-[13px]"><Icon size={14} box={14}><path d="M.5 1.500h13v11H.5zM7 1.500v11" /></Icon></button>
                <button aria-label="页面布局" className="ml-[18px]"><Icon size={14} box={14}><path d="M.5 1.500h10v8H.5zM13.500 1v11.500H.5" /></Icon></button>
                <span className="ml-[14px] h-4 w-px bg-[#c5c6c2]" />
                <button className="ml-[15px] flex items-center gap-3 text-xs">145%<Chevron /></button>
                <button aria-label="缩小" className="ml-[18px]"><Icon size={12} box={12} w={2}><path d="M0 6h12" /></Icon></button>
                <div className="relative ml-[14px] h-4 w-[107px]">
                    <input type="range" aria-label="显示比例" defaultValue={57} className="absolute inset-0 w-full opacity-0" />
                    <div className="pointer-events-none flex h-4 items-center">
                        <span className="h-[2px] w-[55px] bg-[#2450e0]" />
                        <span className="flex size-[10px] items-center justify-center rounded-full bg-white shadow"><span className="size-1 rounded-full bg-[#777]" /></span>
                        <span className="h-[2px] flex-1 bg-[#bbb]" />
                    </div>
                </div>
                <button aria-label="放大" className="ml-[14px]"><Icon size={10} box={10} w={2}><path d="M0 5h10M5 0v10" /></Icon></button>
                <button aria-label="全屏" className="ml-[19px] mr-4"><Icon><path d="M10 2.500h3.500V6M13.500 2.500L9 7M6 13.500H2.500V10M2.500 13.500L7 9M2.500 5.500v-3h3M13.500 10.500v3h-3" /></Icon></button>
            </div>
        </footer>
    );
}

/* ---------- dialog ---------- */

const rangeFields = [
    { id: "list-range", label: "列表区域(L):" },
    { id: "criteria-range", label: "条件区域(C):" },
    { id: "copy-to", label: "复制到(T):" },
];

function FilterDialog() {
    const radio = "size-[13px] shrink-0 appearance-none rounded-full border border-[#333] bg-white checked:bg-[#333] checked:shadow-[inset_0_0_0_2px_white]";
    const box = "size-[13px] shrink-0 appearance-none border border-[#333] bg-white";

    return (
        <section
            role="dialog"
            aria-label="高级筛选"
            className="absolute left-[829px] top-[373px] w-[235px] border border-[#666] bg-[#f0f0f0] pb-2 text-xs text-black shadow-[0_3px_14px_rgba(0,0,0,0.35)]"
        >
            <div className="flex h-[25px] items-center bg-white pl-[3px] pr-[9px]">
                <SheetLogo />
                <span className="ml-[5px] flex-1">高级筛选</span>
                <button aria-label="关闭对话框"><Icon size={12} box={12} w={1.200}><path d="M1 1l10 10M11 1L1 11" /></Icon></button>
            </div>
            <div className="pl-[7px] pr-2">
                <div className="mt-2 flex h-4 items-center gap-[2px]">
                    方式
                    <span className="h-[2px] flex-1 border-b border-white bg-[#a0a0a0]" />
                </div>
                <div className="mt-1 pl-2">
                    <label className="flex h-[23px] items-center gap-[6px]">
                        <input type="radio" name="mode" className={radio} />
                        在原有区域显示筛选结果(F)
                    </label>
                    <label className="flex h-[23px] items-center gap-[6px]">
                        <input type="radio" name="mode" defaultChecked className={radio} />
                        将筛选结果复制到其它位置(O)
                    </label>
                </div>
                <div className="mt-[10px] flex flex-col gap-[5px]">
                    {rangeFields.map((field) => (
                        <div key={field.id} className="flex h-[21px] items-center">
                            <label htmlFor={field.id} className="w-[74px] whitespace-nowrap">{field.label}</label>
                            <div className="flex h-full flex-1 items-center bg-white pr-[5px]">
                                <input id={field.id} className="h-full w-full min-w-0 flex-1 px-1 outline-none" />
                                <button aria-label={`选取${field.label}`}><CellPicker /></button>
                            </div>
                        </div>
                    ))}
                </div>
                <label className="mt-[6px] flex h-6 items-center gap-[5px] whitespace-nowrap">
                    <input type="checkbox" className={box} />
                    扩展结果区域，可能覆盖原有数据(V)
                </label>
                <label className="flex h-6 items-center gap-[5px]">
                    <input type="checkbox" className={box} />
                    选择不重复的记录(R)
                </label>
                <div className="mt-[5px] flex justify-end gap-2">
                    <button className="h-[30px] w-[77px] border-2 border-[#0078d7] bg-[#e1e1e1]">确定</button>
                    <button className="h-[30px] w-[77px] border border-[#adadad] bg-[#e1e1e1]">取消</button>
                </div>
            </div>
            {/* marker boxes */}
            <span className="pointer-events-none absolute left-[6px] top-[72px] h-7 w-[33px] border-[3px] border-[#f00]" />
            <span className="pointer-events-none absolute left-[183px] top-[104px] h-[27px] w-[61px] border-[3px] border-[#f00]" />
        </section>
    );
}

function Watermark() {
    return (
        <div className="pointer-events-none absolute bottom-[7px] right-[9px] flex items-center opacity-80">
            <svg width="43" height="40" viewBox="0 0 43 40" fill="none" aria-hidden="true">
                <path d="M42 1C22 0 2 12 0 27c0 4 2 8 6 10C2 24 16 9 42 1z" fill="#4aa3dc" />
                <path d="M29 13C17 9 6 20 9 29c3 7 17 5 17-3 0-5-8-5-9 0 0 2 1 3 3 3 1-3 4-2 3 0-2 4-10 3-10-3 0-7 8-12 16-13z" fill="#3f86c6" />
                <path d="M34 14c5 11-4 20-20 24 14 2 30-9 26-24-1-3-4-3-6 0z" fill="#56b95f" />
                <path d="M14 38c8-1 14-5 18-10-3 7-9 12-18 10z" fill="#c6da45" />
            </svg>
            <div className="flex flex-col">
                <span className="text-[21px] font-bold leading-6 text-[#3d86cc]">极光下载站</span>
                <span className="font-['Liberation_Sans',sans-serif] text-base font-bold leading-5 text-[#43b565]">www.xz7.com</span>
            </div>
        </div>
    );
}

export default function App() {
    return (
        <div className="relative flex h-screen flex-col overflow-hidden bg-linear-to-r from-[#e1e5e8] via-[#e8e9ea] to-[#e2e4e4] font-['Open_Sans','Noto_Sans_CJK_SC',sans-serif]">
            <TitleBar />
            <MenuBar />
            <Ribbon />
            <div className="flex min-h-0 flex-1">
                <main className="flex min-w-0 flex-1 flex-col bg-linear-to-r from-[#e1e5e7] via-[#efebe8] to-[#e7e9e1] pt-[7px]">
                    <FormulaBar />
                    <Sheet />
                    <SheetTabs />
                </main>
                <SelectionPane />
                <ToolRail />
            </div>
            <div className="shrink-0 bg-linear-to-r from-[#e2e5e7] via-[#efebe7] to-[#e8eae0]">
                <StatusBar />
            </div>
            <FilterDialog />
            <div className="absolute right-[3px] top-[739px] h-[58px] w-[7px] rounded-full bg-linear-to-b from-[#9a9a96] from-25% via-[#22c96a] via-26% to-[#7dee7d] shadow" />
            <Watermark />
        </div>
    );
}
